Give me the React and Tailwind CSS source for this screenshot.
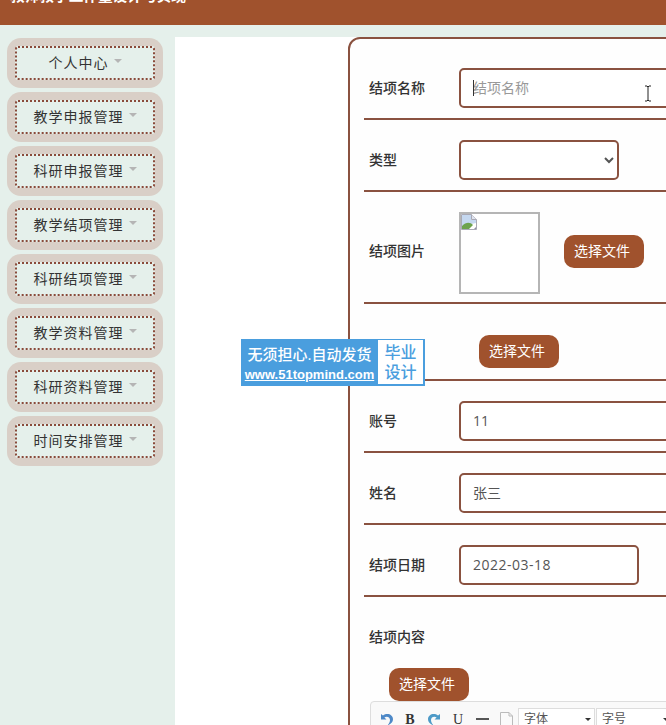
import React from "react";

const FONT = { fontFamily: '"Open Sans", "Noto Sans CJK SC", sans-serif' };
const menus = ["个人中心", "教学申报管理", "科研申报管理", "教学结项管理", "科研结项管理", "教学资料管理", "科研资料管理", "时间安排管理"];

function MenuItem({ label }) {
  return (
    <div className="w-[156px] h-[50px] shrink-0 rounded-[14px] bg-[#d9cfc7] p-2">
      <div className="h-[34px] flex items-center justify-center gap-[5px] border-2 border-dotted border-[#8a4a3a] bg-[#e5f0eb] rounded-[3px] text-[14px] tracking-[1px] text-[#333] pb-[2px]">
        <span>{label}</span>
        <span className="w-0 h-0 border-x-[4px] border-x-transparent border-t-[4px] border-t-[#b5b5b5] mb-[2px]" />
      </div>
    </div>
  );
}

function Row({ label, className = "", children }) {
  return (
    <div className={"flex items-center border-b-2 border-[#8a5240] pl-[5px] " + className}>
      <div className="w-[90px] shrink-0 text-[14px] font-medium text-[#333] pb-[2px]">{label}</div>
      {children}
    </div>
  );
}

function Btn({ className = "" }) {
  return (
    <button className={"w-[80px] h-[33px] rounded-[10px] bg-[#a0522d] text-[#fff] text-[14px] pr-[4px] pb-[2px] " + className}>选择文件</button>
  );
}

const inputCls = "h-[40px] border-2 border-[#8a5240] rounded-[5px] bg-white px-[12px] pb-[2px] text-[14px] text-[#555] outline-none placeholder:text-[#999]";

function BrokenImage() {
  return (
    <svg width="16" height="16" viewBox="0 0 16 16" className="block">
      <path d="M0.5 0.5H10.5L15.5 5.5V15.5H0.5Z" fill="#fff" stroke="#a9a9b5" />
      <path d="M10.5 0.5V5.5H15.5" fill="#dfe3ee" stroke="#a9a9b5" />
      <path d="M1 1H10V6H15V9L1 12Z" fill="#c5d8f0" />
      <path d="M1 15V12C5 8 9 8 12 11L8 15Z" fill="#6da34d" />
      <path d="M13 15L15 13V15Z" fill="#8e8ea6" />
    </svg>
  );
}

function Toolbar() {
  return (
    <div className="ml-[6px] w-[400px] h-[34px] border border-[#ddd] rounded-t-[4px] bg-[#f9f9f9] flex items-center pt-[2px] text-[#333]">
      <div className="w-[24px] ml-[3px] flex justify-center">
        <svg width="15" height="15" viewBox="0 0 15 15"><path d="M2 2V7.5H7.5L5.4 5.5C7.5 3.8 11 4.8 11 8C11 10 10 11.5 8.5 13.5C12 12 14 10 14 7.3C14 2.5 8 0.5 4 3.6Z" fill="#4d88c7" /></svg>
      </div>
      <div className="w-[24px] text-center text-[14px] font-bold" style={{ fontFamily: '"Liberation Serif", serif' }}>B</div>
      <div className="w-[24px] flex justify-center">
        <svg width="15" height="15" viewBox="0 0 15 15"><path d="M13 2V7.5H7.5L9.6 5.5C7.5 3.8 4 4.8 4 8C4 10 5 11.5 6.5 13.5C3 12 1 10 1 7.3C1 2.5 7 0.5 11 3.6Z" fill="#4d9ac7" /></svg>
      </div>
      <div className="w-[24px] text-center text-[14px] underline" style={{ fontFamily: '"Liberation Serif", serif' }}>U</div>
      <div className="w-[24px] flex justify-center"><div className="w-[13px] h-[2px] bg-[#555]" /></div>
      <div className="w-[24px] flex justify-center">
        <svg width="13" height="15" viewBox="0 0 13 15"><path d="M0.5 0.5H9L12.5 4V14.5H0.5Z" fill="#fafafa" stroke="#bbb" /><path d="M9 0.5V4H12.5" fill="none" stroke="#bbb" /></svg>
      </div>
      <div className="w-[77px] h-[22px] border border-[#ddd] bg-white flex items-center text-[12px] text-[#555] pl-[5px] relative">
        字体
        <span className="absolute right-[3px] top-[9px] w-0 h-0 border-x-[3px] border-x-transparent border-t-[3px] border-t-[#333]" />
      </div>
      <div className="w-[77px] ml-[1px] h-[22px] border border-[#ddd] bg-white flex items-center text-[12px] text-[#555] pl-[5px] relative">
        字号
        <span className="absolute right-[3px] top-[9px] w-0 h-0 border-x-[3px] border-x-transparent border-t-[3px] border-t-[#333]" />
      </div>
    </div>
  );
}

export default function App() {
  return (
    <div className="relative w-[666px] h-[725px] overflow-hidden bg-[#e5f0eb]" style={FONT}>
      <header className="h-[25px] overflow-hidden bg-[#a0522d] pl-[10px]">
        <div className="-mt-[16px] leading-[22px] text-[14.67px] font-bold text-white">教师教学工作量设计与实现</div>
      </header>
      <div className="flex pt-[12px]">
        <aside className="w-[175px] shrink-0 pl-[7px] pt-px flex flex-col gap-[4px]">
          {menus.map((m) => <MenuItem key={m} label={m} />)}
        </aside>
        <main className="flex-1 min-w-0 h-[688px] bg-white pl-[173px] overflow-hidden">
          <div className="w-[600px] border-2 border-[#8a5240] rounded-tl-[12px] bg-[#fefefe] pl-[14px] pt-[9px]">
            <Row label="结项名称" className="h-[72px] pt-[10px]">
              <div className="relative">
                <input readOnly placeholder="结项名称" className={inputCls + " w-[480px]"} />
                <span className="absolute left-[14px] top-[12px] w-px h-[16px] bg-[#333]" />
                <svg width="8" height="17" viewBox="0 0 8 17" className="absolute left-[185px] top-[17px]">
                  <path d="M1 1H3L4 2L5 1H7M4 2V15M1 16H3L4 15L5 16H7" fill="none" stroke="#222" />
                </svg>
              </div>
            </Row>
            <Row label="类型" className="h-[72px] pt-[10px]">
              <select className={inputCls + " w-[160px]"}><option></option></select>
            </Row>
            <Row label="结项图片" className="h-[112px] pt-[8px]">
              <div className="w-[81px] h-[82px] border-2 border-[#b5b5b5] bg-white mt-[4px]"><BrokenImage /></div>
              <Btn className="ml-[24px]" />
            </Row>
            <Row label="" className="h-[77px] pt-[20px]">
              <Btn className="ml-[20px]" />
            </Row>
            <Row label="账号" className="h-[72px] pt-[10px]">
              <input readOnly value="11" className={inputCls + " w-[480px]"} />
            </Row>
            <Row label="姓名" className="h-[72px] pt-[10px]">
              <input readOnly value="张三" className={inputCls + " w-[480px]"} />
            </Row>
            <Row label="结项日期" className="h-[72px] pt-[10px]">
              <input readOnly value="2022-03-18" className={inputCls + " w-[180px] tracking-[0.5px]"} />
            </Row>
            <div className="pl-[5px] pt-[30px] text-[14px] font-medium leading-[20px] text-[#333]">结项内容</div>
            <div className="pl-[25px] pt-[21px]"><Btn /></div>
            <Toolbar />
          </div>
        </main>
      </div>
      <div className="absolute left-[241px] top-[339px] w-[184px] h-[47px] bg-[#4a9ede] flex">
        <div className="w-[137px] text-white text-center">
          <div className="text-[15px] font-medium leading-[20px] pt-[5px]">无须担心.自动发货</div>
          <div className="text-[13px] font-semibold leading-[18px] pt-[2px] underline" style={{ fontFamily: '"Liberation Sans", sans-serif' }}>www.51topmind.com</div>
        </div>
        <div className="mt-[1px] mb-[2px] w-[45px] bg-white text-[#4a9ede] text-[16px] font-medium leading-[20px] text-center pt-[2px]">毕业<br />设计</div>
      </div>
    </div>
  );
}
